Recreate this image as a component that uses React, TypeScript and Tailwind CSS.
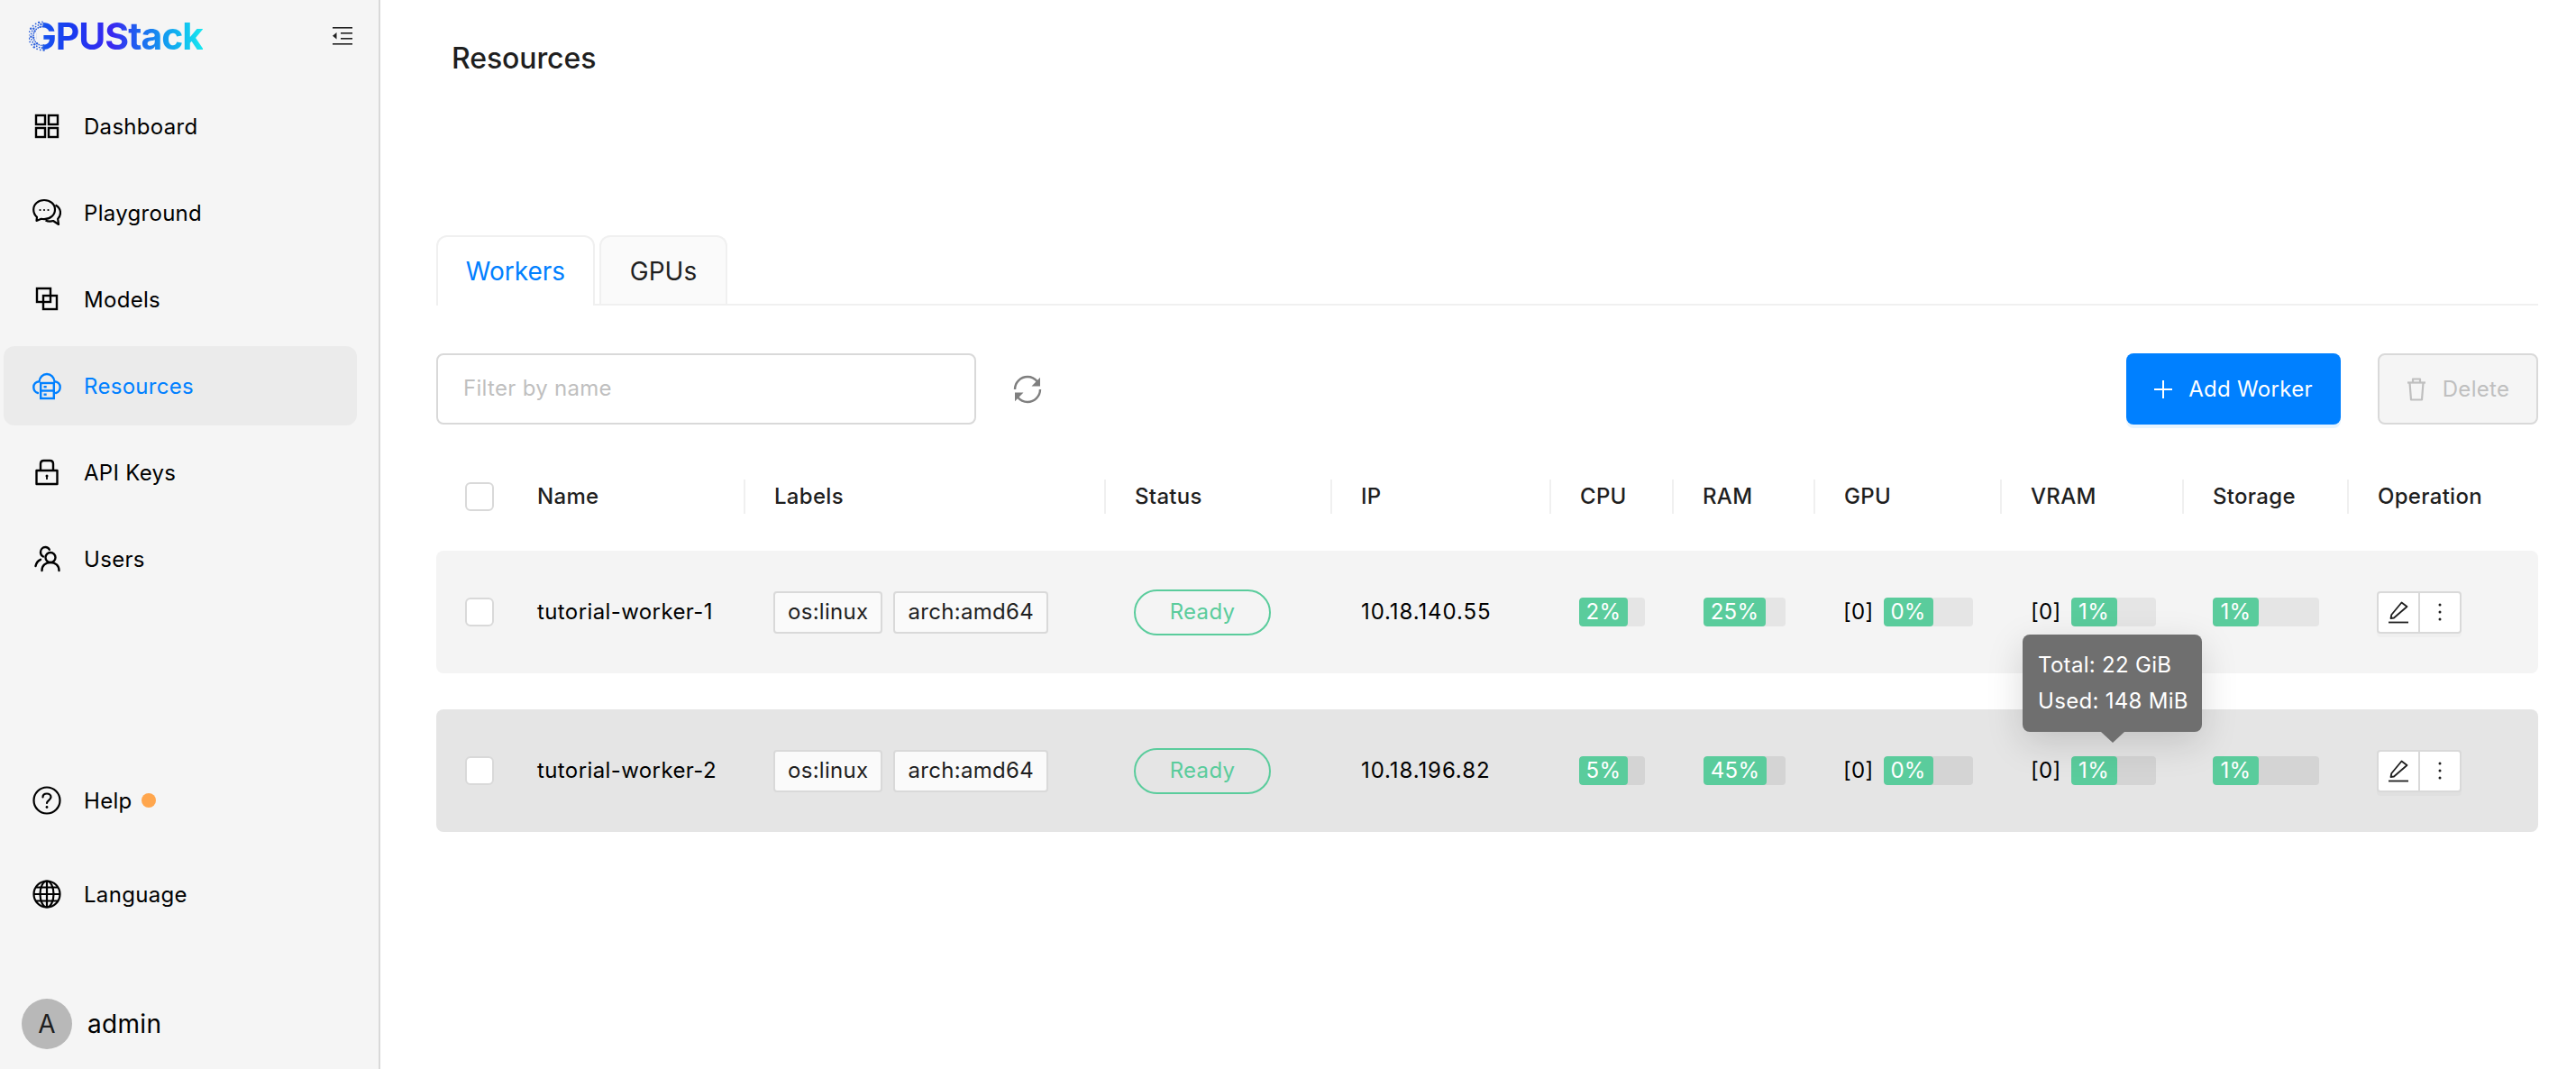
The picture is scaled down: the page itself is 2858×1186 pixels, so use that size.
const sans = 'font-["Inter","Liberation_Sans",sans-serif]';

function IconDashboard() {
  return (
    <svg width="32" height="32" viewBox="0 0 32 32" fill="none" stroke="currentColor" strokeWidth="2.4">
      <rect x="4" y="4" width="10" height="10" />
      <rect x="18" y="4" width="10" height="10" />
      <rect x="4" y="18" width="10" height="10" />
      <rect x="18" y="18" width="10" height="10" />
    </svg>
  );
}

function IconPlayground() {
  return (
    <svg width="32" height="32" viewBox="0 0 32 32" fill="none" stroke="currentColor" strokeWidth="2.2" strokeLinejoin="round">
      <path d="M13 2C6.500 2 1.200 6.400 1.200 12.500c0 3.400 1.500 6.300 3.800 8.300l-.5 4.200 5.300-2.200c1.100.3 2.200.4 3.200.4 6.500 0 12-4.500 12-10.700C25 6.400 19.500 2 13 2z" />
      <path d="M25.500 7.500c3.400 1.900 5.500 5 5.500 8.500 0 2.600-1 5-2.800 6.800l.8 6.200-6-4c-2.800.8-6 .6-8.500-.6" />
      <circle cx="8.500" cy="13" r="1.100" fill="currentColor" stroke="none" />
      <circle cx="13" cy="13" r="1.100" fill="currentColor" stroke="none" />
      <circle cx="17.500" cy="13" r="1.100" fill="currentColor" stroke="none" />
    </svg>
  );
}

function IconModels() {
  return (
    <svg width="32" height="32" viewBox="0 0 32 32" fill="none" stroke="currentColor" strokeWidth="2.4">
      <rect x="5" y="4" width="15" height="15" />
      <rect x="12" y="12" width="15" height="15" />
    </svg>
  );
}

function IconResources() {
  return (
    <svg width="32" height="32" viewBox="0 0 32 32" fill="none" stroke="currentColor" strokeWidth="2.4" strokeLinecap="round">
      <path d="M6 24C3 23.200 1.300 20.800 1.300 17.500 1.300 14 3.800 11.500 7.500 11.300 8 6.500 11.500 3 16 3s8 3.500 8.500 8.300c3.700.2 6.200 2.700 6.200 6.200 0 3.300-1.700 5.700-4.700 6.500" />
      <rect x="9.200" y="13" width="14.600" height="17" fill="#ebebeb" strokeLinecap="butt" />
      <path d="M9.200 21.500h14.600" strokeLinecap="butt" />
      <rect x="12.500" y="16" width="3.200" height="2.400" fill="currentColor" stroke="none" />
      <rect x="12.500" y="24.500" width="3.200" height="2.400" fill="currentColor" stroke="none" />
    </svg>
  );
}

function IconLock() {
  return (
    <svg width="32" height="32" viewBox="0 0 32 32" fill="none" stroke="currentColor" strokeWidth="2.4" strokeLinejoin="round">
      <path d="M9 14V6.500C9 4.500 10.500 3 12.500 3h7C21.500 3 23 4.500 23 6.500V14" />
      <rect x="4.500" y="14" width="23" height="15" />
      <circle cx="16" cy="20" r="1.500" fill="currentColor" stroke="none" />
      <path d="M16 20v4" strokeWidth="1.800" />
    </svg>
  );
}

function IconUsers() {
  return (
    <svg width="32" height="32" viewBox="0 0 32 32" fill="none" stroke="currentColor" strokeWidth="2.4" strokeLinecap="round">
      <circle cx="20" cy="14.500" r="5.500" />
      <path d="M10.500 29c0-5.500 4-9 9.500-9s9.500 3.500 9.500 9" />
      <path d="M12 13.500c-2-1-3-2.800-3-4.700C9 5.600 11.300 3 14.300 3c2 0 3.700 1 4.500 2.800" />
      <path d="M3.500 24c.7-3.500 2.700-6 5.500-7.200" />
    </svg>
  );
}

function IconHelp() {
  return (
    <svg width="32" height="32" viewBox="0 0 32 32" fill="none" stroke="currentColor" strokeWidth="2.2" strokeLinecap="round">
      <circle cx="16" cy="16" r="14.500" />
      <path d="M11.500 12.500c0-2.500 2-4 4.500-4s4.500 1.600 4.500 3.800c0 3.400-4.500 3.500-4.500 6.700" />
      <circle cx="16" cy="23.500" r="1.400" fill="currentColor" stroke="none" />
    </svg>
  );
}

function IconGlobe() {
  return (
    <svg width="32" height="32" viewBox="0 0 32 32" fill="none" stroke="currentColor" strokeWidth="2.2">
      <circle cx="16" cy="16" r="14.500" />
      <ellipse cx="16" cy="16" rx="7.500" ry="14.500" />
      <path d="M16 1.500v29M1.500 16h29M4 8.500h24M4 23.500h24" />
    </svg>
  );
}

function IconCollapse() {
  return (
    <svg width="22" height="20" viewBox="0 0 22 20" fill="currentColor">
      <rect x="0" y="0" width="22" height="1.600" />
      <rect x="9" y="6" width="13" height="1.600" />
      <rect x="9" y="12" width="13" height="1.600" />
      <rect x="0" y="18" width="22" height="1.600" />
      <path d="M0 9.800 4.500 6v7.600z" />
    </svg>
  );
}

function IconRefresh() {
  return (
    <svg width="32" height="32" viewBox="0 0 32 32" fill="none" stroke="#7f7f7f" strokeWidth="2.4">
      <path d="M2 16C2 8.300 8.300 2 16 2c4.300 0 8.200 2 10.800 5.200" />
      <path d="M30 16c0 7.700-6.300 14-14 14-4.300 0-8.200-2-10.800-5.200" />
      <path d="M30 2.800v9.700h-9.500z" fill="#7f7f7f" stroke="none" />
      <path d="M2 29.200v-9.700h9.500z" fill="#7f7f7f" stroke="none" />
    </svg>
  );
}

function IconTrash() {
  return (
    <svg width="22" height="26" viewBox="0 0 22 26" fill="none" stroke="#bfbfbf" strokeWidth="2.2" strokeLinejoin="round">
      <path d="M1 5.500h20" />
      <path d="M7 5.500V1.500h8v4" />
      <path d="M3.500 5.500 5 24.500h12l1.500-19" />
    </svg>
  );
}

function IconEdit() {
  return (
    <svg width="24" height="26" viewBox="0 0 24 26" fill="none" stroke="#1f1f1f" strokeWidth="1.800" strokeLinejoin="round">
      <path d="M7 19.500 3.500 20l.8-4L15.500 2.500l6 4.500z" />
      <path d="M1 24.500h22" />
    </svg>
  );
}

function IconMore() {
  return (
    <svg width="6" height="22" viewBox="0 0 6 22" fill="#1f1f1f">
      <circle cx="3" cy="3" r="1.500" />
      <circle cx="3" cy="11" r="1.500" />
      <circle cx="3" cy="19" r="1.500" />
    </svg>
  );
}

// dotted left arc of the logo's G, painted over the solid letter
function LogoArc() {
  const dots: { x: number; y: number; r: number }[] = [];
  for (let ring = 0; ring < 3; ring++) {
    for (let i = 0; i < 14; i++) {
      const angle = ((-4 + (i + (ring % 2) / 2) * 14) * Math.PI) / 180;
      const radius = 10.500 + ring * 2.600;
      dots.push({
        x: 15.500 - Math.sin(angle) * radius,
        y: 17 + Math.cos(angle) * radius,
        r: i % 3 === 0 ? 1.200 : 0.900,
      });
    }
  }
  return (
    <svg className="absolute top-[6px] left-0" width="34" height="34" viewBox="0 0 34 34">
      <path d="M15.500 3.500A13.500 13.500 0 0 0 15.500 30.500" fill="none" stroke="#f5f5f5" strokeWidth="12" />
      {dots.map((d, i) => (
        <circle key={i} cx={d.x} cy={d.y} r={d.r} fill="#2f62dc" />
      ))}
    </svg>
  );
}

function NavItem({ icon, label, active, badge }: { icon: React.ReactNode; label: string; active?: boolean; badge?: boolean }) {
  return (
    <div className={`flex h-[88px] items-center gap-[25px] rounded-xl pl-[32px] text-[24px] font-normal ${active ? 'bg-[#ebebeb] text-[#0080ff]' : 'text-black'}`}>
      {icon}
      <span className="pt-[2px]">{label}</span>
      {badge && <span className="-ml-[15px] size-4 rounded-full bg-[#ffa64d]" />}
    </div>
  );
}

function Sidebar() {
  return (
    <aside className="flex h-[1186px] w-[422px] shrink-0 flex-col border-r-2 border-[#d9d9d9] bg-[#f5f5f5]">
      <div className="flex h-[96px] items-start justify-between pt-[17px] pr-[29px] pl-[32px]">
        <span className="relative bg-[linear-gradient(90deg,#1560ee_0%,#1a3af0_25%,#3a28f0_48%,#2060f0_62%,#1590f0_75%,#10b8f0_87%,#18e8f0_100%)] bg-clip-text text-[41px] leading-[46px] font-bold tracking-[-1px] text-transparent">
          GPUStack
          <LogoArc />
        </span>
        <span className="mt-[13px] text-[#222222]">
          <IconCollapse />
        </span>
      </div>
      <nav className="flex flex-col gap-2 pr-[24px] pl-[4px]">
        <NavItem icon={<IconDashboard />} label="Dashboard" />
        <NavItem icon={<IconPlayground />} label="Playground" />
        <NavItem icon={<IconModels />} label="Models" />
        <NavItem icon={<IconResources />} label="Resources" active />
        <NavItem icon={<IconLock />} label="API Keys" />
        <NavItem icon={<IconUsers />} label="Users" />
      </nav>
      <div className="mt-auto flex flex-col gap-4 pr-[24px] pl-[4px]">
        <NavItem icon={<IconHelp />} label="Help" badge />
        <NavItem icon={<IconGlobe />} label="Language" />
      </div>
      <div className="mt-[72px] mb-[22px] flex items-center gap-[17px] pl-[24px]">
        <span className="flex size-[56px] items-center justify-center rounded-full bg-[#b8b8b8] text-[28px] text-[#1f1f1f]">A</span>
        <span className="text-[28px] text-black">admin</span>
      </div>
    </aside>
  );
}

const gridCols = 'grid grid-cols-[78px_263px_400px_251px_243px_136px_157px_207px_202px_183px_212px] items-center';

function HeaderCell({ label }: { label: string }) {
  return (
    <div className="flex h-[38px] items-center border-l-2 border-[#f0f0f0] pl-[32px] text-[24px] font-medium text-[#1f1f1f]">{label}</div>
  );
}

function Checkbox({ className }: { className: string }) {
  return <span className={`ml-[32px] block size-[32px] rounded-md border-2 ${className}`} />;
}

function Tag({ label }: { label: string }) {
  return <span className="flex h-[47px] items-center rounded border-2 border-[#d9d9d9] bg-[#fafafa] px-[14px] text-[24px] font-normal text-[#1f1f1f]">{label}</span>;
}

function Progress({ value, fill, width, track }: { value: string; fill: number; width: number; track: string }) {
  return (
    <div className={`h-[32px] overflow-hidden rounded ${track}`} style={{ width }}>
      <div className="flex h-full items-center justify-center rounded bg-[#5acc9c] text-[24px] font-normal text-white" style={{ width: fill }}>
        {value}
      </div>
    </div>
  );
}

type Worker = { name: string; ip: string; cpu: string; cpuFill: number; ram: string; ramFill: number };

function WorkerRow({ worker, hovered }: { worker: Worker; hovered?: boolean }) {
  const track = hovered ? 'bg-[#d4d4d4]' : 'bg-[#e5e5e5]';
  return (
    <div className={`${gridCols} h-[136px] rounded-lg text-[24px] font-normal text-black ${hovered ? 'bg-[#e5e5e5]' : 'bg-[#f4f4f4]'}`}>
      <Checkbox className="border-[#d9d9d9] bg-white" />
      <div className="pl-[34px] tracking-[0.4px]">{worker.name}</div>
      <div className="flex gap-[12px] pl-[33px]">
        <Tag label="os:linux" />
        <Tag label="arch:amd64" />
      </div>
      <div className="pl-[33px]">
        <span className="flex h-[51px] w-[152px] items-center justify-center rounded-full border-2 border-[#5acc9c] text-[#5acc9c]">Ready</span>
      </div>
      <div className="pl-[34px] tracking-[0.9px]">{worker.ip}</div>
      <div className="pl-[33px]">
        <Progress value={worker.cpu} fill={worker.cpuFill} width={73} track={track} />
      </div>
      <div className="pl-[35px]">
        <Progress value={worker.ram} fill={worker.ramFill} width={91} track={track} />
      </div>
      <div className="flex items-center gap-[11px] pl-[33px]">
        <span>[0]</span>
        <Progress value="0%" fill={55} width={99} track={track} />
      </div>
      <div className="relative flex items-center gap-[11px] pl-[34px]">
        <span>[0]</span>
        <Progress value="1%" fill={51} width={94} track={track} />
        {hovered && <UsageTooltip />}
      </div>
      <div className="pl-[34px]">
        <Progress value="1%" fill={51} width={118} track={track} />
      </div>
      <div className="pl-[33px]">
        <div className="flex h-[47px] w-[94px] rounded border-2 border-[#d9d9d9] bg-white shadow-[0_4px_0_rgba(0,0,0,0.02)]">
          <span className="flex w-[46px] items-center justify-center border-r-2 border-[#d9d9d9]">
            <IconEdit />
          </span>
          <span className="flex flex-1 items-center justify-center">
            <IconMore />
          </span>
        </div>
      </div>
    </div>
  );
}

function UsageTooltip() {
  return (
    <div className="absolute bottom-[61px] left-[25px] z-10 w-[199px] rounded-lg bg-[#6f6f6f] py-[14px] pl-[17px] text-[24px] leading-[40px] font-normal text-white shadow-[0_12px_40px_rgba(0,0,0,0.15)]">
      <div>Total: 22 GiB</div>
      <div>Used: 148 MiB</div>
      <span className="absolute top-full left-[87px] size-0 border-x-[13px] border-t-[12px] border-x-transparent border-t-[#6f6f6f]" />
    </div>
  );
}

const workers: Worker[] = [
  { name: 'tutorial-worker-1', ip: '10.18.140.55', cpu: '2%', cpuFill: 54, ram: '25%', ramFill: 69 },
  { name: 'tutorial-worker-2', ip: '10.18.196.82', cpu: '5%', cpuFill: 54, ram: '45%', ramFill: 70 },
];

export default function App() {
  return (
    <div className={`flex h-[1186px] w-[2858px] overflow-hidden bg-white tracking-[0.3px] ${sans}`}>
      <Sidebar />
      <main className="flex-1 pr-[42px] pl-[62px]">
        <h1 className="flex h-[130px] items-center pl-[17px] text-[32px] font-medium tracking-[-0.1px] text-[#1f1f1f]">Resources</h1>
        <div className="mt-[131px] flex h-[78px] gap-[5px] border-b-2 border-[#f0f0f0] tracking-normal">
          <div className="-mb-[2px] flex h-[78px] w-[176px] items-center justify-center rounded-t-xl border-2 border-b-0 border-[#f0f0f0] bg-white text-[28px] font-normal text-[#0080ff]">Workers</div>
          <div className="flex w-[142px] items-center justify-center rounded-t-xl border-2 border-b-0 border-[#f0f0f0] bg-[#fafafa] pt-[2px] text-[28px] font-normal text-[#1f1f1f]">GPUs</div>
        </div>
        <div className="mt-[53px] flex h-[79px] items-center">
          <div className="flex h-full w-[599px] items-center rounded-lg border-2 border-[#d9d9d9] pb-[2px] pl-[28px] text-[24px] text-[#bfbfbf]">Filter by name</div>
          <span className="ml-[41px] text-[#7f7f7f]">
            <IconRefresh />
          </span>
          <div className="ml-auto flex h-full w-[238px] items-center justify-center gap-[18px] rounded-lg bg-[#0080ff] text-[24px] font-normal text-white shadow-[0_4px_0_#e6f4ff]">
            <svg width="20" height="20" viewBox="0 0 20 20" stroke="white" strokeWidth="2"><path d="M10 0v20M0 10h20" /></svg>
            Add Worker
          </div>
          <div className="ml-[41px] flex h-full w-[178px] items-center justify-center gap-[18px] rounded-lg border-2 border-[#d9d9d9] bg-[#f5f5f5] text-[24px] font-normal text-[#bfbfbf]">
            <IconTrash />
            Delete
          </div>
        </div>
        <div className={`${gridCols} mt-[61px]`}>
          <Checkbox className="border-[#d9d9d9] bg-white" />
          <div className="pl-[34px] text-[24px] font-medium text-[#1f1f1f]">Name</div>
          <HeaderCell label="Labels" />
          <HeaderCell label="Status" />
          <HeaderCell label="IP" />
          <HeaderCell label="CPU" />
          <HeaderCell label="RAM" />
          <HeaderCell label="GPU" />
          <HeaderCell label="VRAM" />
          <HeaderCell label="Storage" />
          <HeaderCell label="Operation" />
        </div>
        <div className="mt-[41px] flex flex-col gap-[40px]">
          <WorkerRow worker={workers[0]} />
          <WorkerRow worker={workers[1]} hovered />
        </div>
      </main>
    </div>
  );
}
